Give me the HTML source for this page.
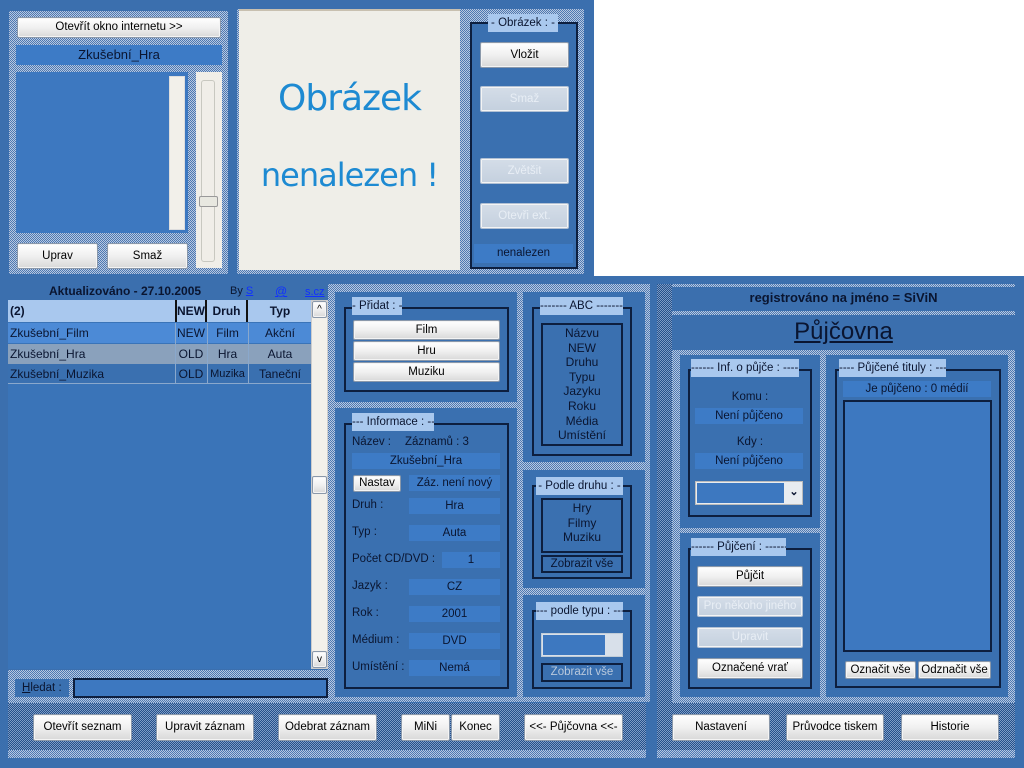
<!DOCTYPE html>
<html><head><meta charset="utf-8"><style>
*{margin:0;padding:0;box-sizing:border-box}
body{width:1024px;height:768px;position:relative;overflow:hidden;background:#fff;font-family:"Liberation Sans",sans-serif;font-size:11.5px;color:#0a1530}
.a{position:absolute}
.win{background:#3b6fae}
.dot{background:repeating-conic-gradient(#b8c8e0 0 25%,#4c78b2 0 50%) 0 0/2px 2px}
.ddot{background:repeating-conic-gradient(#7e9cc6 0 25%,#24508a 0 50%) 0 0/2px 2px}
.pan{background:#3a70b0}
.box{border:2px solid #0d1f3f}
.leg{background:#a9c8ee;text-align:center;line-height:18px;color:#0a1530;white-space:nowrap;overflow:hidden}
.bar{background:#3d7bc6;text-align:center;line-height:16px;white-space:nowrap}
.btn{background:linear-gradient(#ffffff,#f0f0f0 50%,#d8d8d8);border:1px solid #8a98aa;box-shadow:inset 0 0 0 1px #f4f4f4;text-align:center;color:#000;border-radius:2px;white-space:nowrap}
.dis{background:linear-gradient(#d4dde8,#c4d0de);color:#e8eef5;border:1px solid #b0c0d4}
.c{text-align:center}
.t{font-size:12px}
</style></head><body>

<div class="a win" style="left:0;top:0;width:594px;height:276px"></div>
<div class="a dot" style="top:11px;left:9px;width:219px;height:263px"></div>
<div class="a btn" style="left:17px;top:17px;width:204px;height:21px;line-height:19px">Otevřít okno internetu &gt;&gt;</div>
<div class="a bar" style="left:16px;top:45px;width:206px;height:20px;line-height:20px;font-size:13px">Zkušební_Hra</div>
<div class="a" style="left:16px;top:72px;width:172px;height:161px;background:#3d78c0"></div>
<div class="a" style="left:169px;top:76px;width:16px;height:154px;background:#f2f0ea;border:1px solid #ddd"></div>
<div class="a" style="left:196px;top:72px;width:26px;height:196px;background:#f0eee8"></div>
<div class="a" style="left:201px;top:80px;width:14px;height:182px;border:1px solid #c8c8c0;border-radius:3px"></div>
<div class="a" style="left:199px;top:196px;width:19px;height:11px;border:1px solid #999;background:#e8e8e0;border-radius:2px"></div>
<div class="a btn" style="left:17px;top:243px;width:81px;height:26px;line-height:24px">Uprav</div>
<div class="a btn" style="left:107px;top:243px;width:81px;height:26px;line-height:24px">Smaž</div>

<div class="a dot" style="left:237px;top:9px;width:347px;height:265px"></div>
<div class="a" style="left:239px;top:9px;width:221px;height:261px;background:#efeee8;border-top:2px solid #c8c0b0"></div>
<div class="a c" style="left:239px;top:78px;width:221px;font:36px 'DejaVu Sans',sans-serif;color:#1d8ad2;letter-spacing:-1px;white-space:nowrap">Obrázek</div>
<div class="a c" style="left:239px;top:156px;width:221px;font:32px 'DejaVu Sans',sans-serif;color:#1d8ad2;letter-spacing:-1px;white-space:nowrap">nenalezen !</div>

<div class="a pan" style="left:470px;top:22px;width:108px;height:247px;border:2px solid #0d1f3f"></div>
<div class="a leg" style="left:488px;top:14px;width:70px">- Obrázek : -</div>
<div class="a btn" style="left:480px;top:42px;width:89px;height:26px;line-height:24px">Vložit</div>
<div class="a btn dis" style="left:480px;top:86px;width:89px;height:26px;line-height:24px">Smaž</div>
<div class="a btn dis" style="left:480px;top:158px;width:89px;height:26px;line-height:24px">Zvětšit</div>
<div class="a btn dis" style="left:480px;top:203px;width:89px;height:26px;line-height:24px">Otevři ext.</div>
<div class="a bar" style="left:474px;top:244px;width:99px;height:19px;line-height:19px">nenalezen</div>

<div class="a win" style="left:0;top:276px;width:655px;height:492px"></div>
<div class="a" style="left:49px;top:284px;font-weight:bold;font-size:12px">Aktualizováno - 27.10.2005</div>
<div class="a" style="left:230px;top:285px;font-size:11px">By <u style="color:#1030ff">S</u></div>
<div class="a" style="left:275px;top:284px;font-size:12px;color:#1030ff"><u>@</u></div>
<div class="a" style="left:305px;top:286px;font-size:11px;color:#1030ff"><u>s.cz</u></div>
<div class="a dot" style="left:328px;top:284px;width:322px;height:418px"></div>
<div class="a" style="left:8px;top:300px;width:304px;height:369px;background:#3a74b8"></div>
<div class="a t" style="left:8px;top:300px;width:304px;height:22px;background:#a9c8ee;font-weight:bold;line-height:22px">
 <span class="a" style="left:2px">(2)</span>
 <span class="a c" style="left:167px;width:32px;border-left:2px solid #111;border-right:2px solid #111;height:22px">NEW</span>
 <span class="a c" style="left:199px;width:41px;border-right:2px solid #111;height:22px">Druh</span>
 <span class="a c" style="left:240px;width:64px">Typ</span>
</div>
<div class="a t" style="left:8px;top:323px;width:304px;height:20px;background:#4c8ad6;line-height:20px"><span class="a" style="left:2px">Zkušební_Film</span><span class="a c" style="left:167px;width:32px">NEW</span><span class="a c" style="left:199px;width:41px">Film</span><span class="a c" style="left:240px;width:64px">Akční</span></div>
<div class="a t" style="left:8px;top:344px;width:304px;height:20px;background:#8aa1bc;line-height:20px"><span class="a" style="left:2px">Zkušební_Hra</span><span class="a c" style="left:167px;width:32px">OLD</span><span class="a c" style="left:199px;width:41px">Hra</span><span class="a c" style="left:240px;width:64px">Auta</span></div>
<div class="a t" style="left:8px;top:364px;width:304px;height:20px;background:#3a70b0;line-height:20px;border-bottom:1px solid #8aa8cc"><span class="a" style="left:2px">Zkušební_Muzika</span><span class="a c" style="left:167px;width:32px">OLD</span><span class="a c" style="left:199px;width:41px;font-size:11px">Muzika</span><span class="a c" style="left:240px;width:64px">Taneční</span></div>
<div class="a" style="left:175px;top:323px;width:1px;height:61px;background:#8aa8cc"></div>
<div class="a" style="left:207px;top:323px;width:1px;height:61px;background:#8aa8cc"></div>
<div class="a" style="left:248px;top:323px;width:1px;height:61px;background:#8aa8cc"></div>
<div class="a" style="left:311px;top:300px;width:17px;height:369px;background:#f2f0ea;border:1px solid #ccc"></div>
<div class="a btn" style="left:312px;top:301px;width:15px;height:17px;font-size:10px;line-height:15px">^</div>
<div class="a btn" style="left:312px;top:476px;width:15px;height:18px"></div>
<div class="a btn" style="left:312px;top:651px;width:15px;height:17px;font-size:10px;line-height:15px">v</div>
<div class="a dot" style="left:8px;top:670px;width:322px;height:33px"></div>
<div class="a" style="left:15px;top:679px;width:54px;height:18px;background:#3a70b0;line-height:18px;padding-left:7px;white-space:nowrap"><u>H</u>ledat :</div>
<div class="a" style="left:73px;top:678px;width:255px;height:20px;background:#3d78c0;border:2px solid #0d1f3f"></div>

<div class="a pan" style="left:335px;top:292px;width:182px;height:110px"></div>
<div class="a box" style="left:344px;top:307px;width:165px;height:85px"></div>
<div class="a leg" style="left:352px;top:297px;width:50px">- Přidat : -</div>
<div class="a btn" style="left:353px;top:320px;width:147px;height:20px;line-height:18px">Film</div>
<div class="a btn" style="left:353px;top:341px;width:147px;height:20px;line-height:18px">Hru</div>
<div class="a btn" style="left:353px;top:362px;width:147px;height:20px;line-height:18px">Muziku</div>

<div class="a pan" style="left:335px;top:408px;width:182px;height:289px"></div>
<div class="a box" style="left:344px;top:423px;width:165px;height:266px"></div>
<div class="a leg" style="left:352px;top:413px;width:82px">--- Informace : ---</div>
<div class="a" style="left:352px;top:436px">Název :</div><div class="a" style="left:405px;top:436px">Záznamů : 3</div>
<div class="a bar" style="left:352px;top:453px;width:148px">Zkušební_Hra</div>
<div class="a btn" style="left:353px;top:475px;width:48px;height:17px;line-height:15px">Nastav</div>
<div class="a bar" style="left:409px;top:475px;width:91px">Záz. není nový</div>
<div class="a" style="left:352px;top:499px">Druh :</div><div class="a bar" style="left:409px;top:498px;width:91px">Hra</div>
<div class="a" style="left:352px;top:526px">Typ :</div><div class="a bar" style="left:409px;top:525px;width:91px">Auta</div>
<div class="a" style="left:352px;top:553px">Počet CD/DVD :</div><div class="a bar" style="left:442px;top:552px;width:58px">1</div>
<div class="a" style="left:352px;top:580px">Jazyk :</div><div class="a bar" style="left:409px;top:579px;width:91px">CZ</div>
<div class="a" style="left:352px;top:607px">Rok :</div><div class="a bar" style="left:409px;top:606px;width:91px">2001</div>
<div class="a" style="left:352px;top:634px">Médium :</div><div class="a bar" style="left:409px;top:633px;width:91px">DVD</div>
<div class="a" style="left:352px;top:661px">Umístění :</div><div class="a bar" style="left:409px;top:660px;width:91px">Nemá</div>

<div class="a pan" style="left:523px;top:292px;width:122px;height:170px"></div>
<div class="a box" style="left:532px;top:307px;width:100px;height:149px"></div>
<div class="a leg" style="left:540px;top:297px;width:83px">------- ABC -------</div>
<div class="a c" style="left:541px;top:323px;width:82px;height:123px;border:2px solid #0d1f3f;line-height:14.6px;padding-top:1px;font-size:12px">Názvu<br>NEW<br>Druhu<br>Typu<br>Jazyku<br>Roku<br>Média<br>Umístění</div>

<div class="a pan" style="left:523px;top:470px;width:122px;height:118px"></div>
<div class="a box" style="left:532px;top:485px;width:100px;height:94px"></div>
<div class="a leg" style="left:536px;top:477px;width:87px">- Podle druhu : -</div>
<div class="a c" style="left:541px;top:498px;width:82px;height:55px;border:2px solid #0d1f3f;line-height:14.5px;padding-top:1px;font-size:12px">Hry<br>Filmy<br>Muziku</div>
<div class="a c" style="left:541px;top:555px;width:82px;height:18px;border:2px solid #0d1f3f;line-height:14px">Zobrazit vše</div>

<div class="a pan" style="left:523px;top:595px;width:122px;height:102px"></div>
<div class="a box" style="left:532px;top:610px;width:100px;height:79px"></div>
<div class="a leg" style="left:536px;top:602px;width:87px">--- podle typu : ---</div>
<div class="a" style="left:541px;top:633px;width:82px;height:24px;background:#d8e0ea;border:1px solid #c0ccd8"></div>
<div class="a" style="left:543px;top:635px;width:62px;height:20px;background:#3d78c0"></div>
<div class="a c" style="left:541px;top:663px;width:82px;height:19px;border:2px solid #0d1f3f;line-height:15px;color:#b8c8dc">Zobrazit vše</div>

<div class="a ddot" style="left:8px;top:703px;width:638px;height:49px"></div>
<div class="a dot" style="left:8px;top:750px;width:638px;height:8px"></div>
<div class="a btn" style="left:33px;top:714px;width:99px;height:27px;line-height:25px">Otevřít seznam</div>
<div class="a btn" style="left:156px;top:714px;width:98px;height:27px;line-height:25px">Upravit záznam</div>
<div class="a btn" style="left:278px;top:714px;width:99px;height:27px;line-height:25px">Odebrat záznam</div>
<div class="a btn" style="left:401px;top:714px;width:49px;height:27px;line-height:25px">MiNi</div>
<div class="a btn" style="left:451px;top:714px;width:49px;height:27px;line-height:25px">Konec</div>
<div class="a btn" style="left:524px;top:714px;width:99px;height:27px;line-height:25px">&lt;&lt;- Půjčovna &lt;&lt;-</div>

<div class="a win" style="left:655px;top:276px;width:369px;height:492px"></div>
<div class="a ddot" style="left:657px;top:284px;width:15px;height:470px"></div>
<div class="a dot" style="left:672px;top:284px;width:343px;height:3px"></div>
<div class="a c" style="left:672px;top:287px;width:343px;height:24px;line-height:22px;font-weight:bold;font-size:13px">registrováno na jméno = SiViN</div>
<div class="a dot" style="left:672px;top:311px;width:343px;height:4px"></div>
<div class="a c" style="left:672px;top:316px;width:343px;font-size:24px;line-height:32px"><u>Půjčovna</u></div>
<div class="a dot" style="left:672px;top:350px;width:343px;height:353px"></div>

<div class="a pan" style="left:680px;top:355px;width:140px;height:173px"></div>
<div class="a box" style="left:688px;top:369px;width:124px;height:148px"></div>
<div class="a leg" style="left:691px;top:359px;width:108px">------ Inf. o půjče : ------</div>
<div class="a c" style="left:688px;top:391px;width:124px">Komu :</div>
<div class="a bar" style="left:695px;top:408px;width:108px">Není půjčeno</div>
<div class="a c" style="left:688px;top:436px;width:124px">Kdy :</div>
<div class="a bar" style="left:695px;top:453px;width:108px">Není půjčeno</div>
<div class="a" style="left:695px;top:481px;width:108px;height:24px;background:#e8ecf0;border:1px solid #bbb"></div>
<div class="a" style="left:697px;top:483px;width:87px;height:20px;background:#3d78c0"></div>
<div class="a c" style="left:786px;top:485px;width:16px;font-size:11px;font-weight:bold">⌄</div>

<div class="a pan" style="left:680px;top:533px;width:140px;height:164px"></div>
<div class="a box" style="left:688px;top:548px;width:124px;height:141px"></div>
<div class="a leg" style="left:691px;top:538px;width:95px">------ Půjčení : ------</div>
<div class="a btn" style="left:697px;top:566px;width:106px;height:21px;line-height:19px">Půjčit</div>
<div class="a btn dis" style="left:697px;top:596px;width:106px;height:21px;line-height:19px">Pro někoho jiného</div>
<div class="a btn dis" style="left:697px;top:627px;width:106px;height:21px;line-height:19px">Upravit</div>
<div class="a btn" style="left:697px;top:658px;width:106px;height:21px;line-height:19px">Označené vrať</div>

<div class="a pan" style="left:826px;top:355px;width:182px;height:342px"></div>
<div class="a box" style="left:835px;top:369px;width:166px;height:319px"></div>
<div class="a leg" style="left:839px;top:359px;width:107px">---- Půjčené tituly : ----</div>
<div class="a bar" style="left:843px;top:381px;width:148px">Je půjčeno : 0 médií</div>
<div class="a" style="left:843px;top:400px;width:149px;height:252px;border:2px solid #0d1f3f;background:#3d78c0"></div>
<div class="a btn" style="left:845px;top:661px;width:71px;height:18px;line-height:16px">Označit vše</div>
<div class="a btn" style="left:918px;top:661px;width:73px;height:18px;line-height:16px">Odznačit vše</div>

<div class="a ddot" style="left:672px;top:703px;width:343px;height:49px"></div>
<div class="a dot" style="left:657px;top:750px;width:358px;height:8px"></div>
<div class="a btn" style="left:672px;top:714px;width:98px;height:27px;line-height:25px">Nastavení</div>
<div class="a btn" style="left:786px;top:714px;width:98px;height:27px;line-height:25px">Průvodce tiskem</div>
<div class="a btn" style="left:901px;top:714px;width:98px;height:27px;line-height:25px">Historie</div>
</body></html>
